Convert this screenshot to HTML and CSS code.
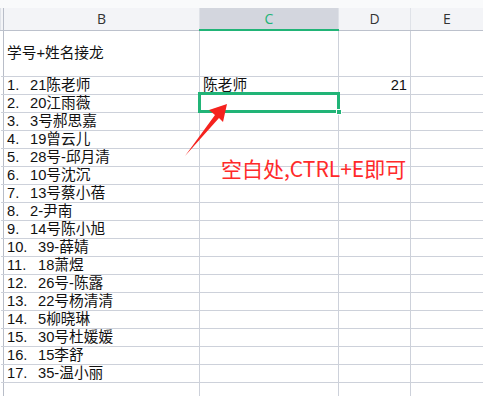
FILE: index.html
```html
<!DOCTYPE html>
<html lang="zh-CN">
<head>
    <meta charset="UTF-8">
    <title>学号+姓名接龙</title>
    <link rel="stylesheet" href="styles.css">
</head>
<body>
    <div class="sheet">
        <div class="topbar"></div>
        <table class="grid">
            <colgroup>
                <col class="col-stub">
                <col class="col-b">
                <col class="col-c">
                <col class="col-d">
                <col class="col-e">
            </colgroup>
            <thead>
                <tr>
                    <th class="stub"></th>
                    <th>B</th>
                    <th class="active">C</th>
                    <th>D</th>
                    <th>E</th>
                </tr>
            </thead>
            <tbody>
                <tr class="tall">
                    <td class="stub"></td>
                    <td>学号+姓名接龙</td>
                    <td></td><td></td><td></td>
                </tr>
                <tr><td class="stub"></td><td><span class="num">1.</span>21陈老师</td><td>陈老师</td><td class="right">21</td><td></td></tr>
                <tr><td class="stub"></td><td><span class="num">2.</span>20江雨薇</td><td></td><td></td><td></td></tr>
                <tr><td class="stub"></td><td><span class="num">3.</span>3号郝思嘉</td><td></td><td></td><td></td></tr>
                <tr><td class="stub"></td><td><span class="num">4.</span>19曾云儿</td><td></td><td></td><td></td></tr>
                <tr><td class="stub"></td><td><span class="num">5.</span>28号-邱月清</td><td></td><td></td><td></td></tr>
                <tr><td class="stub"></td><td><span class="num">6.</span>10号沈沉</td><td></td><td></td><td></td></tr>
                <tr><td class="stub"></td><td><span class="num">7.</span>13号蔡小蓓</td><td></td><td></td><td></td></tr>
                <tr><td class="stub"></td><td><span class="num">8.</span>2-尹南</td><td></td><td></td><td></td></tr>
                <tr><td class="stub"></td><td><span class="num">9.</span>14号陈小旭</td><td></td><td></td><td></td></tr>
                <tr><td class="stub"></td><td><span class="num wide">10.</span>39-薛婧</td><td></td><td></td><td></td></tr>
                <tr><td class="stub"></td><td><span class="num wide">11.</span>18萧煜</td><td></td><td></td><td></td></tr>
                <tr><td class="stub"></td><td><span class="num wide">12.</span>26号-陈露</td><td></td><td></td><td></td></tr>
                <tr><td class="stub"></td><td><span class="num wide">13.</span>22号杨清清</td><td></td><td></td><td></td></tr>
                <tr><td class="stub"></td><td><span class="num wide">14.</span>5柳晓琳</td><td></td><td></td><td></td></tr>
                <tr><td class="stub"></td><td><span class="num wide">15.</span>30号杜媛媛</td><td></td><td></td><td></td></tr>
                <tr><td class="stub"></td><td><span class="num wide">16.</span>15李舒</td><td></td><td></td><td></td></tr>
                <tr><td class="stub"></td><td><span class="num wide">17.</span>35-温小丽</td><td></td><td></td><td></td></tr>
                <tr><td class="stub"></td><td></td><td></td><td></td><td></td></tr>
            </tbody>
        </table>

        <!-- selected cell C3 -->
        <div class="selection"><span class="handle"></span></div>

        <!-- annotation -->
        <svg class="arrow" width="60" height="70" viewBox="180 100 60 70">
            <polygon points="227,104 209,110 215,115 185,156 219,118 223,122" fill="#f5231e"/>
        </svg>
        <div class="note">空白处,CTRL+E即可</div>
    </div>
</body>
</html>
```

FILE: styles.css
```css
* {
    margin: 0;
    padding: 0;
    box-sizing: border-box;
}

body {
    background-color: #fff;
    font-family: 'Liberation Sans', 'Noto Sans CJK SC', sans-serif;
    color: #111;
    overflow: hidden;
}

.sheet {
    position: relative;
    width: 483px;
    height: 396px;
}

.topbar {
    height: 8px;
    background-color: #f9fafb;
}

.grid {
    border-collapse: collapse;
    table-layout: fixed;
    width: 483px;
    font-size: 14.7px;
}

.col-stub { width: 3px; }
.col-b { width: 196px; }
.col-c { width: 139px; }
.col-d { width: 72px; }
.col-e { width: 73px; }

.grid th {
    height: 22px;
    background-color: #f3f4f7;
    border-left: 1px solid #dfe2e8;
    border-right: 1px solid #dfe2e8;
    border-bottom: 1px solid #bcc1cc;
    font-family: 'Open Sans', 'Liberation Sans', sans-serif;
    font-weight: normal;
    font-size: 14px;
    color: #333;
}

.grid th.stub {
    border-right: 1px solid #b8bdc8;
}

.grid th.active {
    background-color: #d3d6de;
    color: #21b477;
    border-bottom: 2px solid #21b477;
}

.grid td {
    height: 18px;
    padding: 0 3px;
    border: 1px solid #cdd1da;
    white-space: nowrap;
    overflow: hidden;
    line-height: 17px;
    vertical-align: middle;
}

.grid td.stub {
    padding: 0;
    border-left: none;
    border-right: 1px solid #b8bdc8;
}

.grid tr.tall td {
    height: 46px;
}

.grid td.right {
    text-align: right;
}

.num {
    display: inline-block;
    width: 23px;
}

.num.wide {
    width: 31px;
}

.selection {
    position: absolute;
    left: 198px;
    top: 92px;
    width: 142px;
    height: 21px;
    border: 3px solid #21b477;
}

.handle {
    position: absolute;
    right: -5px;
    bottom: -5px;
    width: 6px;
    height: 6px;
    background-color: #21b477;
    border: 1px solid #fff;
}

.arrow {
    position: absolute;
    left: 180px;
    top: 100px;
}

.note {
    position: absolute;
    left: 221px;
    top: 154px;
    font-family: 'Noto Sans CJK SC', sans-serif;
    font-size: 21px;
    line-height: 28px;
    color: #ff2a2a;
    white-space: nowrap;
}
```
